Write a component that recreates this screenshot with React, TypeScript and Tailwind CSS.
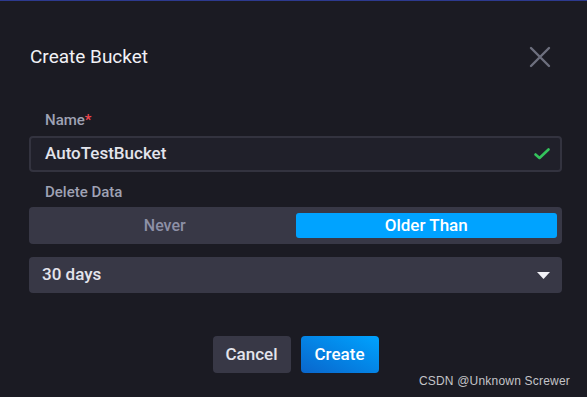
import { useState } from 'react';

const font = { fontFamily: 'Roboto, "Noto Sans", sans-serif' };

export default function App() {
  const [mode, setMode] = useState<'never' | 'older'>('older');

  return (
    <div
      className="relative w-full h-[397px] overflow-hidden bg-[#1b1b23] border-t border-[#2d3a8f] text-[#e6e7ee]"
      style={font}
    >
      {/* header */}
      <div className="flex items-center justify-between h-[22px] mt-[45px] pl-[30px] pr-[36px]">
        <h1 className="text-[19px] leading-[22px] font-normal text-[#f1f1f6]">Create Bucket</h1>
        <button className="w-[22px] h-[22px] flex items-center justify-center">
          <svg width="22" height="22" viewBox="0 0 22 22" fill="none" stroke="#6d6f7e" strokeWidth="2.4" strokeLinecap="round">
            <path d="M2 2 L20 20 M20 2 L2 20" />
          </svg>
        </button>
      </div>

      {/* body */}
      <div className="flex flex-col pl-[29px] pr-[25px] mt-[42px]">
        <label className="pl-[16px] h-[20px] leading-[20px] text-[15px] font-medium text-[#9fa2b4]">
          Name<span className="text-[#f0474f]">*</span>
        </label>
        <div className="mt-[6px] h-[36px] flex items-center justify-between rounded-[4px] border-2 border-[#33333f] bg-[#20202a] pl-[14px] pr-[10px]">
          <span className="text-[17px] font-medium text-[#e3e4ec]">AutoTestBucket</span>
          <svg width="16" height="12" viewBox="0 0 16 12" fill="none" stroke="#34c35c" strokeWidth="2.6" strokeLinecap="round" strokeLinejoin="round">
            <path d="M1.5 6.5 L5.5 10 L14.5 1.5" />
          </svg>
        </div>

        <label className="mt-[10px] pl-[16px] h-[20px] leading-[20px] text-[15px] font-medium text-[#9fa2b4]">
          Delete Data
        </label>
        <div className="mt-[5px] h-[37px] flex rounded-[4px] bg-[#383846] px-[5px] py-[6px]">
          <button
            onClick={() => setMode('never')}
            className={`flex-1 rounded-[3px] text-[16px] font-medium ${mode === 'never' ? 'bg-[#00a3ff] text-white' : 'text-[#8d90a6]'}`}
          >
            Never
          </button>
          <button
            onClick={() => setMode('older')}
            className={`flex-1 rounded-[3px] text-[17px] font-medium ${mode === 'older' ? 'bg-[#00a3ff] text-white' : 'text-[#8d90a6]'}`}
          >
            Older Than
          </button>
        </div>

        <div className="mt-[13px] h-[36px] flex items-center justify-between rounded-[4px] bg-[#383846] pl-[13px] pr-[12px]">
          <span className="text-[17px] font-medium text-[#e3e4ec]">30 days</span>
          <svg width="13" height="7" viewBox="0 0 13 7">
            <path d="M0 0 H13 L6.5 7 Z" fill="#f2f2f7" />
          </svg>
        </div>

        <div className="mt-[43px] flex justify-center gap-[10px]">
          <button className="w-[78px] h-[37px] rounded-[4px] bg-[#383846] text-[17px] font-medium text-[#e3e4ec]">
            Cancel
          </button>
          <button className="w-[78px] h-[37px] rounded-[4px] bg-linear-to-tr from-[#0a66cc] to-[#00a3ff] text-[17px] font-medium text-white">
            Create
          </button>
        </div>
      </div>

      <div
        className="absolute right-[17px] bottom-[7px] text-[12px] tracking-[0.2px] text-[#c4c4c8]"
        style={{ fontFamily: '"Liberation Sans", Arial, sans-serif' }}
      >
        CSDN @Unknown Screwer
      </div>
    </div>
  );
}
